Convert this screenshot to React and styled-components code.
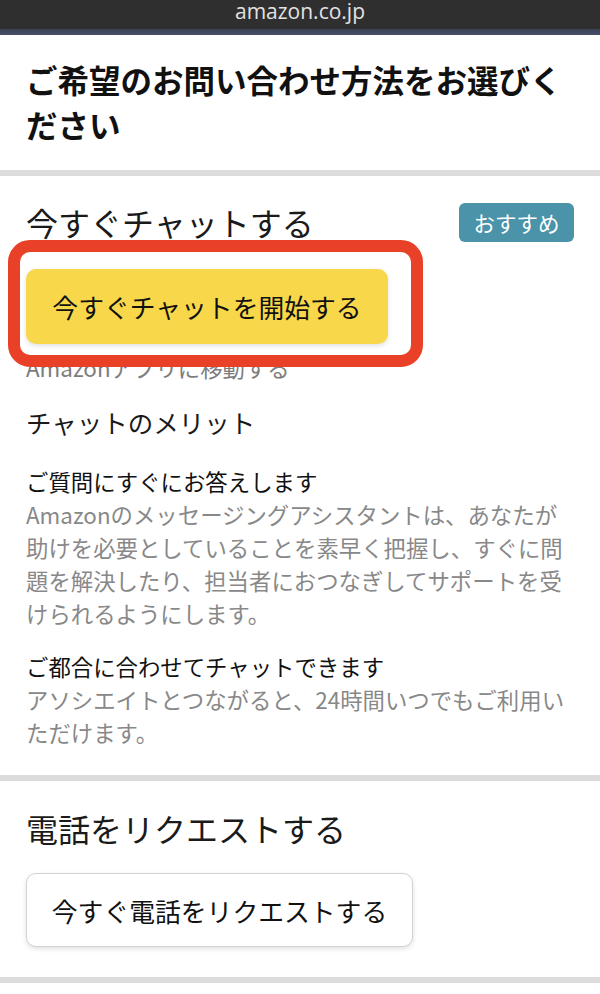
import React from 'react';
import styled, { createGlobalStyle } from 'styled-components';

const GlobalStyle = createGlobalStyle`
    body {
        margin: 0;
        background: #fff;
        font-family: "Noto Sans CJK JP", "Noto Sans", sans-serif;
        color: #111;
    }
`;

// 브라우저 주소 표시줄
const TopBar = styled.div`
    height: 29px;
    background: #2f2f30;
    color: #e2e2e2;
    text-align: center;
    font-family: "Open Sans", "Liberation Sans", sans-serif;
    font-size: 21px;
    line-height: 22px;
`;

const Stripe = styled.div`
    height: 6px;
    background: linear-gradient(#3a4252, #46506a);
`;

const Divider = styled.div`
    height: 6px;
    background: #dcdcdc;
`;

const Section = styled.section`
    position: relative;
    padding: ${props => props.pad};
`;

const Title = styled.h1`
    margin: 0;
    font-size: 31.5px;
    line-height: 45px;
    font-weight: 700;
    color: #111;
`;

const HeadRow = styled.div`
    display: flex;
    justify-content: space-between;
    align-items: center;
`;

const Heading = styled.h2`
    margin: 0;
    font-size: 32px;
    line-height: 40px;
    font-weight: 400;
    color: #1a1a1a;
`;

const Badge = styled.span`
    display: flex;
    align-items: center;
    justify-content: center;
    width: 115px;
    height: 39px;
    margin-top: 2px;
    border-radius: 6px;
    background: #4a93a9;
    color: #fff;
    font-size: 21.5px;
`;

const Button = styled.button`
    display: flex;
    align-items: center;
    justify-content: center;
    width: ${props => props.w}px;
    height: ${props => props.h}px;
    margin-top: ${props => props.mt}px;
    padding: 0;
    border-radius: 10px;
    border: ${props => props.primary ? 'none' : '1px solid #d2d2d2'};
    background: ${props => props.primary ? '#f8d84a' : '#fff'};
    box-shadow: 0 2px 5px rgba(0, 0, 0, 0.12);
    font-family: inherit;
    font-size: 25.8px;
    color: #111;
`;

// 빨간 강조 테두리
const Highlight = styled.div`
    position: absolute;
    top: 64px;
    left: 8px;
    width: 415px;
    height: 127px;
    box-sizing: border-box;
    border: 12px solid #e84127;
    border-radius: 22px;
    pointer-events: none;
`;

const Sub = styled.p`
    margin: ${props => props.mt}px 0 0;
    font-size: 22.4px;
    line-height: 30px;
    color: #7d7d7d;
`;

const SubHeading = styled.h3`
    margin: 22px 0 0;
    font-size: 25.5px;
    line-height: 36px;
    font-weight: 400;
    color: #1a1a1a;
`;

const Merit = styled.div`
    margin-top: ${props => props.mt}px;
`;

const MeritTitle = styled.div`
    font-size: 22.4px;
    line-height: 33px;
    color: #111;
`;

const MeritText = styled.div`
    font-size: 22.4px;
    line-height: 33px;
    color: #888;
`;

const App = () => {
    return (
        <>
            <GlobalStyle />
            <TopBar>amazon.co.jp</TopBar>
            <Stripe />
            <Section pad="22px 26px 23px">
                <Title>ご希望のお問い合わせ方法をお選びください</Title>
            </Section>
            <Divider />
            <Section pad="25px 26px 26px">
                <HeadRow>
                    <Heading>今すぐチャットする</Heading>
                    <Badge>おすすめ</Badge>
                </HeadRow>
                <Button primary w={362} h={75} mt={27}>今すぐチャットを開始する</Button>
                <Sub mt={8}>Amazonアプリに移動する</Sub>
                <SubHeading>チャットのメリット</SubHeading>
                <Merit mt={25}>
                    <MeritTitle>ご質問にすぐにお答えします</MeritTitle>
                    <MeritText>
                        Amazonのメッセージングアシスタントは、あなたが助けを必要としていることを素早く把握し、すぐに問題を解決したり、担当者におつなぎしてサポートを受けられるようにします。
                    </MeritText>
                </Merit>
                <Merit mt={20}>
                    <MeritTitle>ご都合に合わせてチャットできます</MeritTitle>
                    <MeritText>アソシエイトとつながると、24時間いつでもご利用いただけます。</MeritText>
                </Merit>
                <Highlight />
            </Section>
            <Divider />
            <Section pad="27px 26px 30px">
                <Heading>電話をリクエストする</Heading>
                <Button w={387} h={74} mt={25}>今すぐ電話をリクエストする</Button>
            </Section>
            <Divider />
        </>
    );
};

export default App;
